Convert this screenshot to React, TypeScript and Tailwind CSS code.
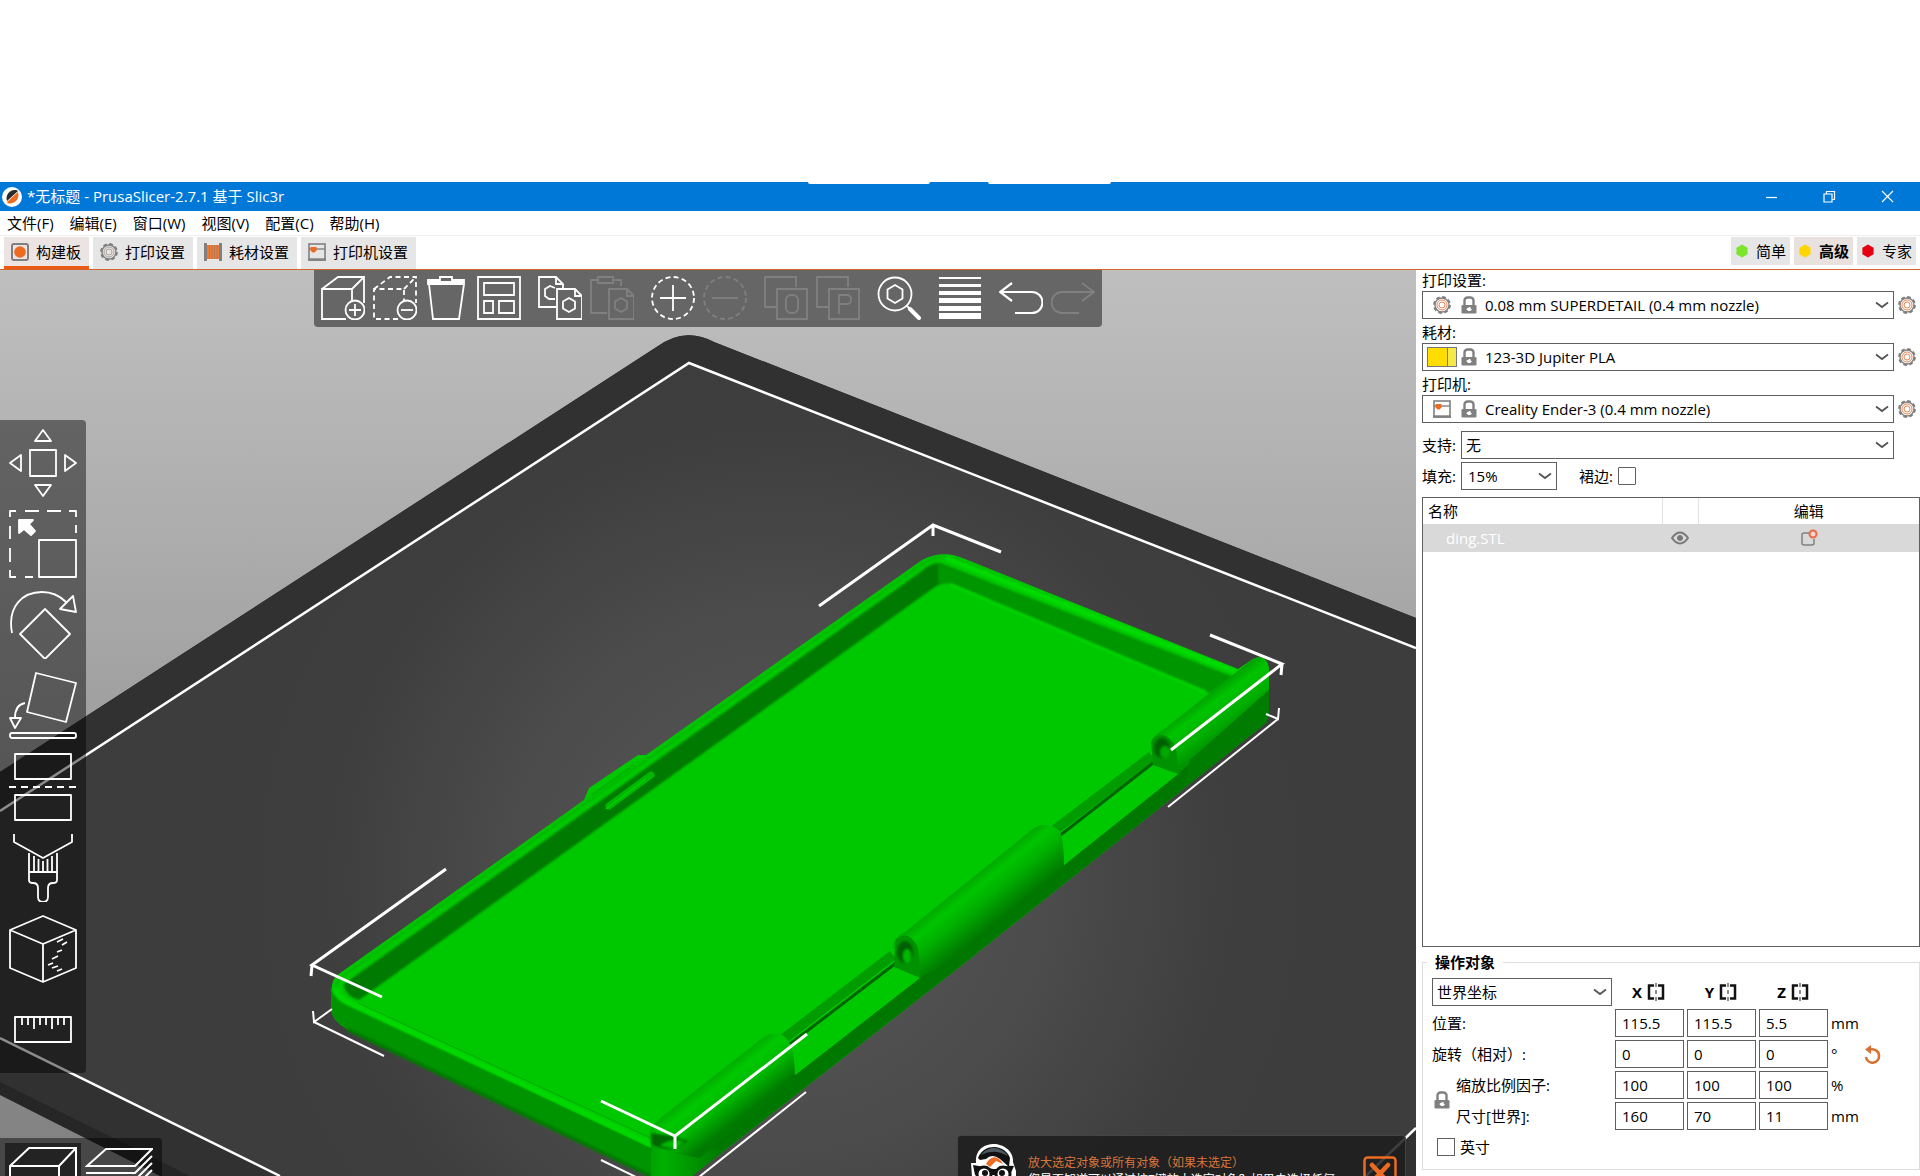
import { ReactNode } from 'react'

const MENU = ['文件(F)', '编辑(E)', '窗口(W)', '视图(V)', '配置(C)', '帮助(H)']

const Gear = ({ ring = '#e07b45' }: { ring?: string }) => (
  <svg viewBox="0 0 18 18" className="size-[18px] shrink-0" fill="none">
    <circle cx="9" cy="9" r="7.8" stroke="#808080" strokeWidth="2.2" strokeDasharray="3.6 2.526" />
    <circle cx="9" cy="9" r="7" stroke="#808080" strokeWidth="1.4" />
    <circle cx="9" cy="9" r="5" stroke={ring} strokeWidth="0.9" />
    <circle cx="9" cy="9" r="3" stroke={ring} strokeWidth="0.9" />
  </svg>
)

const PrinterIcon = () => (
  <svg viewBox="0 0 18 18" className="size-[18px] shrink-0" fill="none">
    <rect x="1" y="1" width="16" height="16" stroke="#808080" strokeWidth="1.6" />
    <path d="M1 6h16" stroke="#808080" strokeWidth="1.4" />
    <path d="M0 16.5h18" stroke="#808080" strokeWidth="2.4" />
    <path d="M2.5 4h6v3.5L6.5 9.5h-2l-2-2z" fill="#ed6b21" />
  </svg>
)

const Lock = () => (
  <svg viewBox="0 0 16 18" className="h-[18px] w-4 shrink-0">
    <path d="M3.5 9V4.5a3 3 0 0 1 3-3h3a3 3 0 0 1 3 3V9" fill="none" stroke="#808080" strokeWidth="2.4" />
    <rect x="0.5" y="9" width="15" height="8.5" rx="1.2" fill="#808080" />
    <path d="M6 12h1.2a1.3 1.3 0 0 1 2.6.8L11 13.5l-1.6 1.4H7.2L5.5 13.5z" fill="#fff" />
  </svg>
)

const Chevron = () => (
  <svg viewBox="0 0 14 8" className="pointer-events-none h-2 w-[14px] shrink-0" fill="none" stroke="#555" strokeWidth="1.8">
    <path d="M1 1.5 7 6l6-4.5" />
  </svg>
)

const Combo = ({ label, value, className = '', children }: { label: string; value: string; className?: string; children?: ReactNode }) => (
  <div className={`flex h-7 items-center border border-[#5f5f5f] bg-white pr-1 ${className}`}>
    {children}
    <select id={label} aria-label={label} className="h-full min-w-0 flex-1 appearance-none bg-transparent outline-none">
      <option>{value}</option>
    </select>
    <Chevron />
  </div>
)

const PresetRow = ({ label, value, icon }: { label: string; value: string; icon: ReactNode }) => (
  <div className="mb-[3px]">
    <label htmlFor={label} className="flex h-[21px] items-center leading-[19px]">
      {label}:
    </label>
    <div className="flex items-center gap-1 pr-1">
      <Combo label={label} value={value} className="flex-1">
        <span className="flex w-[38px] shrink-0 justify-center">{icon}</span>
        <Lock />
        <span className="w-2 shrink-0" />
      </Combo>
      <button aria-label={`编辑${label}`}>
        <Gear />
      </button>
    </div>
  </div>
)

const Tab = ({ active, icon, children }: { active?: boolean; icon: ReactNode; children: ReactNode }) => (
  <button
    className={`flex h-8 items-center gap-[7px] border-b-[3px] pr-2 pl-[7px] ${
      active ? 'border-[#ed5a14] bg-[#ece4e2]' : 'border-[#e6e6e6] bg-[#e6e6e6]'
    }`}
  >
    {icon}
    {children}
  </button>
)

const Mode = ({ color, active, children }: { color: string; active?: boolean; children: ReactNode }) => (
  <button className={`flex h-7 items-center gap-[7px] pr-1 pl-1 ${active ? 'bg-[#e9e1de] font-bold' : 'bg-[#e6e6e6]'}`}>
    <svg viewBox="0 0 14 14" className="size-[14px]">
      <path d="M7 .5 12.6 3.7v6.6L7 13.5 1.4 10.3V3.7z" fill={color} />
    </svg>
    {children}
  </button>
)

const Tool = ({ name, dim, children }: { name: string; dim?: boolean; children: ReactNode }) => (
  <button aria-label={name} disabled={dim} className="size-11">
    <svg viewBox="0 0 44 44" className="size-11" fill="none" stroke={dim ? '#808080' : '#fff'} strokeWidth="1.8">
      {children}
    </svg>
  </button>
)

const Gizmo = ({ name, children }: { name: string; children: ReactNode }) => (
  <button aria-label={name} className="size-[68px]">
    <svg viewBox="0 0 68 68" className="size-[68px]" fill="none" stroke="#fff" strokeWidth="1.8" strokeLinejoin="round">
      {children}
    </svg>
  </button>
)

const Group = ({ children }: { children: ReactNode }) => <div className="flex gap-2">{children}</div>

const TopToolbar = () => (
  <div className="absolute top-0 left-[314px] flex h-[57px] items-start gap-[17px] rounded-b-[4px] bg-[#666] px-[7px] pt-[6px]">
    <Group>
      <Tool name="添加">
        <path d="M25 43H1V13h30v13M1 13 17 1h26v26M31 13 43 1" />
        <circle cx="34" cy="34" r="9.5" />
        <path d="M34 28v12M28 34h12" />
      </Tool>
      <Tool name="删除">
        <path d="M25 43H1V13h30v13M1 13 17 1h26v26M31 13 43 1" strokeDasharray="5 3.5" />
        <circle cx="34" cy="34" r="9.5" />
        <path d="M28 34h12" />
      </Tool>
      <Tool name="全部删除">
        <path d="M3 4h12V1h12v3h12v4H3zM4 8l4 35h26l5-35" />
        <path d="M3 6h36" />
      </Tool>
      <Tool name="排列">
        <path d="M1 1h42v42H1zM7 7h30v12H7zM7 25h9v12H7zM22 25h15v12H22z" />
      </Tool>
    </Group>
    <Group>
      <Tool name="复制">
        <path d="M18 31H1V1h17l7 7v4M18 1v7h7" />
        <path d="M17 23h-6l-4-3v-7l5-3 5 2" />
        <path d="M19 13h18l7 7v23H19zM37 13v7h7" />
        <path d="m31 22 6 3.5v7L31 36l-6-3.5v-7z" />
      </Tool>
      <Tool name="粘贴" dim>
        <path d="M17 37H1V4h7M24 4h7v6M8 1h15v6H8z" />
        <path d="M19 13h18l7 7v23H19zM37 13v7h7" />
        <path d="m31 22 6 3.5v7L31 36l-6-3.5v-7z" />
      </Tool>
    </Group>
    <Group>
      <Tool name="添加实例">
        <circle cx="22" cy="22" r="21" strokeDasharray="5 3.25" />
        <path d="M22 9v26M9 22h26" />
      </Tool>
      <Tool name="移除实例" dim>
        <circle cx="22" cy="22" r="21" strokeDasharray="5 3.25" />
        <path d="M9 22h26" />
      </Tool>
    </Group>
    <Group>
      <Tool name="拆分为对象" dim>
        <path d="M13 31H1V1h31v10M13 13h30v30H13z" />
        <rect x="22" y="19" width="12" height="18" rx="5" />
      </Tool>
      <Tool name="拆分为零件" dim>
        <path d="M13 31H1V1h31v10M13 13h30v30H13z" />
        <path d="M23 38V19h8a4 4 0 0 1 4 4v1a4 4 0 0 1-4 4h-8" />
      </Tool>
    </Group>
    <Tool name="搜索">
      <circle cx="18" cy="18" r="16.5" />
      <path d="m18 9 7.5 4.5v9L18 27l-7.500-4.500v-9z" />
      <path d="m30 30 3 3" />
      <path d="m33 33 9 9" strokeWidth="4" strokeLinecap="round" />
    </Tool>
    <Tool name="可变层高">
      <path d="M1 1h42v2H1zM1 8h42v3H1zM1 15h42v4H1zM1 22h42v5H1zM1 30h42v5H1zM1 37h42v6H1z" fill="#fff" stroke="none" />
    </Tool>
    <Group>
      <Tool name="撤销">
        <path d="M13 7 1 16l12 9M1 16h32a10.5 10.5 0 0 1 0 21H16" strokeWidth="2.2" />
      </Tool>
      <Tool name="重做" dim>
        <path d="m31 7 12 9-12 9M43 16H11a10.5 10.5 0 0 0 0 21h17" />
      </Tool>
    </Group>
  </div>
)

const LeftToolbar = () => (
  <div className="absolute top-[150px] left-0 flex flex-col gap-[13px] rounded-r-[4px] bg-black/45 p-[9px]">
    <Gizmo name="移动">
      <path d="M21 21h26v26H21zM34 1l8 11H26zM34 67l8-11H26zM1 34l11-8v16zM67 34l-11-8v16z" />
    </Gizmo>
    <Gizmo name="缩放">
      <path d="M30 30h37v37H30z" />
      <path d="M1 7V1h6M16 1h14M38 1h14M60 1h7v6M67 15v8M1 16v13M1 38v14M1 60v7h6M16 67h8" />
      <path d="M10 10h14l-4 4 6 7-4 4-7-6-5 4z" fill="#fff" />
    </Gizmo>
    <Gizmo name="旋转">
      <path d="m36 18 25 25-25 25-25-25z" />
      <path d="M3 42C-2 15 14 1 33 1c10 0 18 4 24 10M51 18 64 5l3 16z" />
    </Gizmo>
    <Gizmo name="放置面">
      <path d="m27 1 40 10-10 39-39-10zM16 31c-6 1-10 6-10 15M1 46h11l-6 10z" />
      <rect x="1" y="61" width="66" height="5" rx="2" />
    </Gizmo>
    <Gizmo name="切割">
      <path d="M6 1h56v25H6zM6 42h56v25H6z" />
      <path d="M0 34h68" strokeDasharray="7 5" />
    </Gizmo>
    <Gizmo name="绘制支撑">
      <path d="M5 0v8l29 16L63 8V0M20 19v27q0 3 4 3 5 0 5 5v9q0 5 5 5t5-5v-9q0-5 5-5 4 0 4-3V19M20 38h28M25 22v16M29.5 25v13M34 27v11M38.5 25v13M43 22v16" />
    </Gizmo>
    <Gizmo name="接缝绘制">
      <path d="m34 1 33 14v38L34 67 1 53V15zM1 15l33 14 33-14M34 29v38" />
      <path d="m48 27 6-3M53 30l5-3M48 37l5-2M43 44l6-3M39 50l5-2M43 53l6-2M48 56l5-2" />
    </Gizmo>
    <Gizmo name="测量">
      <rect x="6" y="21" width="56" height="25" />
      <path d="M13 21v8M19 21v8M25 21v12M31 21v8M37 21v8M43 21v12M49 21v8M55 21v8" />
    </Gizmo>
  </div>
)

const ViewToggle = () => (
  <div className="absolute bottom-0 left-0 flex h-[38px] overflow-hidden rounded-tr-[4px] bg-black/45 px-[5px] pt-[5px]">
    <button aria-label="3D 编辑视图" className="h-[76px] w-[76px] shrink-0 bg-black/50 p-1">
      <svg viewBox="0 0 68 68" className="size-[68px]" fill="none" stroke="#fff" strokeWidth="2">
        <path d="M1 19 20 1h47v48L50 67H1zM1 19h49v48M50 19 67 1" />
      </svg>
    </button>
    <button aria-label="预览" className="h-[76px] w-[76px] shrink-0 p-1">
      <svg viewBox="0 0 68 68" className="size-[68px]" fill="none" stroke="#fff" strokeWidth="2">
        <path d="M2 19 21 2h46L50 19zM1 26h49L67 9M1 33h49l17-17M1 40h49l17-17M1 47h49l17-17" />
      </svg>
    </button>
  </div>
)

const Hint = () => (
  <div className="absolute right-[10px] bottom-0 flex h-[41px] w-[449px] items-start overflow-hidden rounded-t-[4px] border border-b-0 border-[#444] bg-[#1c1c1c]/85">
    <svg viewBox="0 0 48 48" className="mt-[7px] ml-3 size-12 shrink-0">
      <path d="M6 20C5 6 15 1 24 1s20 7 19 18l3 9v20H3L1 20z" fill="#fff" />
      <path d="M8 15C11 7 18 4 24 4c8 0 14 5 16 11l-1 9-9-8q-8-6-14 0l-6 1z" fill="#111" />
      <path d="M11 12c4-5 8-7 13-7s11 3 14 8q-14-8-27-1z" fill="#4b5a60" />
      <path d="M16 21c5-9 12-9 17 0l-7-3-6 6z" fill="#ed6b21" />
      <path d="M3 22q12 2 20 4h4q10-4 17-3l-4 9H5z" fill="#111" />
      <circle cx="14" cy="31" r="7" fill="#fff" stroke="#111" strokeWidth="3" />
      <circle cx="33" cy="31" r="7" fill="#fff" stroke="#111" strokeWidth="3" />
      <circle cx="15" cy="30" r="3" fill="#111" />
      <circle cx="32" cy="30" r="3" fill="#111" />
    </svg>
    <div className="mt-[18px] ml-[10px] flex-1 text-[12px] leading-[17px] whitespace-nowrap">
      <div className="text-[#d9743c]">放大选定对象或所有对象（如果未选定）</div>
      <div className="text-white">您是否知道可以通过按Z键放大选定对象？如果未选择任何</div>
    </div>
    <button aria-label="关闭提示" className="mt-5 mr-2 size-[34px] shrink-0">
      <svg viewBox="0 0 34 34" className="size-[34px]" fill="none" stroke="#ed6b21">
        <rect x="1.5" y="1.5" width="31" height="31" rx="3" strokeWidth="2.5" />
        <path d="m9 9 16 17M25 9 9 26" strokeWidth="4.5" strokeLinecap="round" />
      </svg>
    </button>
  </div>
)

const Scene = () => (
  <svg viewBox="0 270 1416 906" preserveAspectRatio="xMinYMin slice" className="absolute inset-0 h-full w-full">
    <defs>
      <linearGradient id="sky" x1="0" y1="0" x2="0" y2="1">
        <stop offset="0" stopColor="#bfbfbf" />
        <stop offset="1" stopColor="#808080" />
      </linearGradient>
      <radialGradient id="bed" gradientUnits="userSpaceOnUse" cx="780" cy="880" r="520">
        <stop offset="0" stopColor="#595859" />
        <stop offset="0.5" stopColor="#4d4c4d" />
        <stop offset="0.85" stopColor="#3f3f3f" />
        <stop offset="1" stopColor="#3d3d3d" />
      </radialGradient>
      <linearGradient id="roll" gradientUnits="userSpaceOnUse" x1="969" y1="882" x2="999" y2="919">
        <stop offset="0" stopColor="#00ac00" />
        <stop offset="0.2" stopColor="#00c400" />
        <stop offset="0.5" stopColor="#00b000" />
        <stop offset="1" stopColor="#007a00" />
      </linearGradient>
      <linearGradient id="rollA" gradientUnits="userSpaceOnUse" x1="712" y1="1079" x2="742" y2="1117">
        <stop offset="0" stopColor="#00b000" />
        <stop offset="0.2" stopColor="#00c800" />
        <stop offset="0.55" stopColor="#00b800" />
        <stop offset="1" stopColor="#007a00" />
      </linearGradient>
      <linearGradient id="rollC" gradientUnits="userSpaceOnUse" x1="1204" y1="698" x2="1234" y2="738">
        <stop offset="0" stopColor="#00a400" />
        <stop offset="0.2" stopColor="#00c400" />
        <stop offset="0.6" stopColor="#00ac00" />
        <stop offset="1" stopColor="#008000" />
      </linearGradient>
      <linearGradient id="corner" gradientUnits="userSpaceOnUse" x1="640" y1="0" x2="720" y2="0">
        <stop offset="0" stopColor="#009600" />
        <stop offset="0.3" stopColor="#00b000" />
        <stop offset="1" stopColor="#007a00" />
      </linearGradient>
      <filter id="soft" x="-5%" y="-5%" width="110%" height="110%">
        <feGaussianBlur stdDeviation="1.2" />
      </filter>
    </defs>
    <rect y="269" width="1416" height="907" fill="url(#sky)" />
    {/* print bed */}
    <path d="M0 772 655 348Q684 326 714 342L1416 618V1176H160L0 1095z" fill="#262626" />
    <path d="M0 772 655 348Q684 326 714 342L1416 618V1176H190L0 1082z" fill="#313131" />
    <path d="M0 811 689 363 1416 648V1128L1366 1176H280L0 1038z" fill="url(#bed)" />
    <path d="M0 811 689 363 1416 648M1416 1128 1366 1176M280 1176 0 1038" fill="none" stroke="#fff" strokeWidth="2.5" />

    {/* case body */}
    <path
      d="M332 985Q333 977 343 971L584 800 589 788 638 755 646 755 922 560Q943 549 965 559L1238 669 1253 659Q1266 653 1269 668V715L1266 723 966 962 692 1176H651L347 1029Q331 1020 331 1008z"
      fill="#00c800"
    />
    <path d="M332 988Q334 996 345 1003L651 1148 680 1152 692 1176H651L347 1029Q331 1020 331 1008z" fill="#009400" />
    <path d="M347 1029 651 1176" stroke="#007a00" strokeWidth="4" filter="url(#soft)" />
    <path d="M334 988Q336 995 345 1001L651 1144" fill="none" stroke="#00d800" strokeWidth="6" filter="url(#soft)" />
    <path d="M358 1003 651 1138" fill="none" stroke="#00aa00" strokeWidth="1" />

    {/* inner walls */}
    <g filter="url(#soft)">
      <path d="M344 984 922 571Q930 563 940 563L1233 677 1210 693 955 585Q943 580 932 589L359 1000Q344 995 344 984z" fill="#007a00" />
      <path d="M938 563 1233 677 1210 693 955 585Q946 581 938 584z" fill="#009600" />
      <path d="M950 584 1206 692" stroke="#00dc00" strokeWidth="2" />
      <path d="M336 984 344 975 922 564Q942 551 962 561L1236 672" fill="none" stroke="#00b400" strokeWidth="2" />
      <path d="M946 558 1236 672" fill="none" stroke="#00dc00" strokeWidth="5" />
    </g>
    <path d="M609 806 651 775" stroke="#00b800" strokeWidth="7" strokeLinecap="round" />
    <path d="M606 809 646 779" stroke="#00d000" strokeWidth="1.5" />
    <path d="M592 795 634 765" stroke="#00b400" strokeWidth="2" />

    {/* outer hinge side */}
    <path d="M680 1152 795 1075 1064 865 1178 774 1269 677V715L1266 723 966 962 692 1176H672z" fill="#007800" />
    <path d="M651 1144Q668 1157 686 1148L724 1150 692 1176H651z" fill="url(#corner)" />

    {/* rods and ledges */}
    <path d="M782 1040 893 955M1052 832 1152 756" stroke="#009c00" strokeWidth="10" />
    <path d="M786 1047 896 963M1058 837 1153 763" stroke="#006400" strokeWidth="3" />
    <path d="M795 1050 894 967 920 978 795 1075zM1064 837 1152 767 1178 774 1064 865z" fill="#00c800" />

    {/* hinge barrels */}
    <path d="M649 1132Q655 1121 668 1112L765 1036Q778 1029 788 1040 795 1050 795 1080L700 1158 660 1150z" fill="url(#rollA)" />
    <path d="M893 948Q893 937 905 932L1034 828Q1048 820 1059 831 1064 838 1064 866L942 966 920 978z" fill="url(#roll)" />
    <path d="M1151 744Q1152 736 1163 730L1253 659Q1266 653 1269 668V690L1200 755 1178 774z" fill="url(#rollC)" />
    <path d="M1190 760 1269 690V715L1266 723 1185 786z" fill="#007c00" />
    <path d="M895 942Q899 934 908 936 918 941 919 956L920 978 894 967z" fill="#009200" />
    <path d="M1151 742Q1156 732 1166 736 1176 742 1177 755L1178 774 1153 765z" fill="#009200" />
    <g filter="url(#soft)">
      <ellipse cx="905" cy="952" rx="8" ry="11" fill="#006000" />
      <ellipse cx="907" cy="956" rx="4" ry="7" fill="#00b800" />
      <ellipse cx="1162" cy="748" rx="8" ry="10" fill="#006000" />
      <ellipse cx="1165" cy="752" rx="5" ry="6" fill="#00a800" />
      <path d="M651 1133 672 1136 688 1141 676 1149Q660 1151 651 1144z" fill="#006800" />
      <path d="M660 1146Q668 1138 684 1141L676 1149z" fill="#00b800" />
    </g>

    {/* selection box corners */}
    <g fill="none" stroke="#fff" strokeWidth="3">
      <path d="M819 606 933 525 1001 552M933 525V536" />
      <path d="M1210 635 1282 664 1171 750M1282 664 1281 675" />
      <path d="M1266 714 1278 719 1279 708M1278 719 1168 807" strokeWidth="2" />
      <path d="M446 869 312 965 382 997M312 965 311 976" />
      <path d="M332 1009 314 1022 313 1011M314 1022 384 1056" strokeWidth="2" />
      <path d="M601 1101 675 1136 807 1034M675 1136V1149" />
      <path d="M601 1160 636 1177M806 1092 699 1177" strokeWidth="2" />
    </g>
  </svg>
)

const AXES = ['X', 'Y', 'Z']

const ROWS = [
  { label: '位置:', values: ['115.5', '115.5', '5.5'], unit: 'mm' },
  { label: '旋转（相对）:', values: ['0', '0', '0'], unit: '°', reset: true },
  { label: '缩放比例因子:', values: ['100', '100', '100'], unit: '%', sub: true },
  { label: '尺寸[世界]:', values: ['160', '70', '11'], unit: 'mm', sub: true },
]

const Manipulation = () => (
  <fieldset className="relative mt-[5px] h-[218px] border border-[#dcdcdc] px-[9px]">
    <legend className="ml-[-5px] px-2 leading-[20px] font-bold">操作对象</legend>
    <div className="mt-[6px] flex flex-col gap-[3px]">
      <div className="flex items-center gap-[3px]">
        <Combo label="坐标系" value="世界坐标" className="w-[180px] pl-1" />
        {AXES.map((axis) => (
          <div key={axis} className="flex w-[69px] items-center justify-center gap-[5px] pr-1 font-bold">
            <span className="w-3 text-right">{axis}</span>
            <button aria-label={`镜像 ${axis}`}>
              <svg viewBox="0 0 18 18" className="size-[18px]" fill="none" stroke="#111" strokeWidth="2.5">
                <path d="M7 2.5H2V15.5H7M11 2.5h5V15.5h-5" />
                <path d="M9 0v4M9 7v4M9 14v4" stroke="#666" strokeWidth="1.5" />
              </svg>
            </button>
          </div>
        ))}
      </div>
      {ROWS.map((row) => (
        <div key={row.label} className="flex h-7 items-center gap-[3px]">
          <span className={`w-[180px] ${row.sub ? 'pl-6' : ''}`}>{row.label}</span>
          {row.values.map((value, i) => (
            <input
              key={AXES[i]}
              aria-label={`${row.label} ${AXES[i]}`}
              defaultValue={value}
              className="h-7 w-[69px] border border-[#5f5f5f] px-[6px] outline-none"
            />
          ))}
          <span className="w-[29px]">{row.unit}</span>
          {row.reset && (
            <button aria-label="重置旋转">
              <svg viewBox="0 0 18 20" className="h-5 w-[18px]" fill="none" stroke="#d9702f" strokeWidth="2.5">
                <path d="M7 5.5c5-1 9 2 9 6a6.5 6.5 0 0 1-13 1.5" />
                <path d="M8 1v9L2 5.5z" fill="#d9702f" stroke="none" />
              </svg>
            </button>
          )}
        </div>
      ))}
      <label className="flex h-7 items-center gap-[5px] pl-[5px]">
        <input type="checkbox" className="size-[18px] appearance-none border border-[#5f5f5f] bg-white" />
        英寸
      </label>
    </div>
    {/* ratio lock spans the scale and size rows */}
    <button aria-label="锁定比例" className="absolute bottom-[52px] left-[11px]">
      <Lock />
    </button>
  </fieldset>
)

const Sidebar = () => (
  <aside className="flex w-[504px] shrink-0 flex-col bg-white pl-[6px]">
    <PresetRow label="打印设置" value="0.08 mm SUPERDETAIL (0.4 mm nozzle)" icon={<Gear />} />
    <PresetRow
      label="耗材"
      value="123-3D Jupiter PLA"
      icon={
        <span className="flex h-5 w-[30px] border border-[#777]">
          <span className="flex-1 border-r border-[#777] bg-[#ffdd00]" />
          <span className="w-2 bg-[#f5e94a]" />
        </span>
      }
    />
    <PresetRow label="打印机" value="Creality Ender-3 (0.4 mm nozzle)" icon={<PrinterIcon />} />

    <div className="mt-[5px] flex items-center pr-[26px]">
      <label htmlFor="支持" className="w-[39px]">
        支持:
      </label>
      <Combo label="支持" value="无" className="flex-1 pl-1" />
    </div>
    <div className="mt-[3px] flex items-center">
      <label htmlFor="填充" className="w-[39px]">
        填充:
      </label>
      <Combo label="填充" value="15%" className="w-24 pl-[6px]" />
      <label className="ml-[22px] flex items-center gap-[5px]">
        裙边:
        <input type="checkbox" className="size-[18px] appearance-none rounded-[1px] border border-[#5f5f5f] bg-white" />
      </label>
    </div>

    <div className="mt-[7px] min-h-0 flex-1 border border-[#5f5f5f]">
      <table className="w-full table-fixed border-collapse">
        <thead>
          <tr className="h-[26px]">
            <th className="border-r border-[#e2e2e2] pl-[5px] text-left font-normal">名称</th>
            <th className="w-9 border-r border-[#e2e2e2]" />
            <th className="w-[221px] font-normal">编辑</th>
          </tr>
        </thead>
        <tbody>
          <tr className="h-7 bg-[#d9d9d9]">
            <td className="pl-[23px] text-white">ding.STL</td>
            <td>
              <svg viewBox="0 0 18 14" className="mx-auto h-[14px] w-[18px]" fill="none" stroke="#777">
                <path d="M1 7q8-11 16 0-8 11-16 0z" strokeWidth="2" />
                <circle cx="9" cy="7" r="2.5" fill="#777" />
              </svg>
            </td>
            <td>
              <svg viewBox="0 0 18 18" className="mx-auto size-[18px]" fill="none">
                <path d="M9 4H4q-2 0-2 2v8q0 2 2 2h8q2 0 2-2v-4" stroke="#808080" strokeWidth="1.5" />
                <circle cx="13" cy="5" r="3.5" stroke="#e8684a" strokeWidth="2" fill="#f6d5cb" />
              </svg>
            </td>
          </tr>
        </tbody>
      </table>
    </div>
    <Manipulation />
    <div className="h-[6px]" />
  </aside>
)

export default function App() {
  return (
    <div className="flex h-screen flex-col overflow-hidden bg-white pt-[182px] font-['Open_Sans','Noto_Sans_CJK_SC',sans-serif] text-[15px] leading-[20px] text-black">
      <header className="relative flex h-[29px] shrink-0 items-center bg-[#0078d7] pr-1 pl-[2px] text-white">
        <span className="absolute top-0 left-[808px] h-[2px] w-[122px] rounded-b bg-white" />
        <span className="absolute top-0 left-[988px] h-[2px] w-[123px] rounded-b bg-white" />
        <svg viewBox="0 0 20 20" className="mr-[5px] size-5">
          <circle cx="10" cy="10" r="10" fill="#fff" />
          <path d="M5 14C3 8 8 2 14 3q1 0 2 1z" fill="#2b2b2b" />
          <path d="M5 15C7 19 19 15 16 5z" fill="#ed6b21" />
        </svg>
        <h1 className="flex-1 pb-px">*无标题 - PrusaSlicer-2.7.1 基于 Slic3r</h1>
        <div className="flex">
          {['M4 10.5h11', 'M4 7h8v8H4zM6.5 7V4.5h8v8H12', 'm4 4 11 11M15 4 4 15'].map((d, i) => (
            <button key={d} aria-label={['最小化', '还原', '关闭'][i]} className="flex h-[29px] w-[58px] items-center justify-center">
              <svg viewBox="0 0 19 19" className="size-[19px]" fill="none" stroke="#fff" strokeWidth="1.2">
                <path d={d} />
              </svg>
            </button>
          ))}
        </div>
      </header>

      <nav className="flex h-[25px] shrink-0 items-center gap-4 border-b border-[#efefef] pl-[7px]">
        {MENU.map((item) => (
          <button key={item}>{item}</button>
        ))}
      </nav>

      <div className="flex h-[34px] shrink-0 items-start gap-1 border-b border-[#d8622a] pt-px pr-1 pl-1">
        <Tab
          active
          icon={
            <svg viewBox="0 0 18 18" className="size-[18px]">
              <rect x="1" y="1" width="16" height="16" rx="2" fill="none" stroke="#808080" strokeWidth="2" />
              <circle cx="9" cy="9" r="5.8" fill="#ed6b21" />
            </svg>
          }
        >
          构建板
        </Tab>
        <Tab icon={<Gear ring="#a89a90" />}>打印设置</Tab>
        <Tab
          icon={
            <svg viewBox="0 0 18 18" className="size-[18px]">
              <path d="M0 0h3v18H0zM15 0h3v18h-3z" fill="#808080" />
              <path d="M3 2h12v14H3z" fill="#ed7b35" />
              <path d="M5.5 2v14M8 2v14M10.5 2v14M13 2v14" stroke="#a87a60" strokeWidth="0.8" />
            </svg>
          }
        >
          耗材设置
        </Tab>
        <Tab icon={<PrinterIcon />}>打印机设置</Tab>
        <div className="flex-1" />
        <Mode color="#7de52e">简单</Mode>
        <Mode color="#ffd500" active>
          高级
        </Mode>
        <Mode color="#e3000f">专家</Mode>
      </div>

      <main className="flex min-h-0 flex-1">
        <section className="relative min-w-0 flex-1 overflow-hidden">
          <Scene />
          <TopToolbar />
          <LeftToolbar />
          <ViewToggle />
          <Hint />
        </section>
        <Sidebar />
      </main>
    </div>
  )
}
